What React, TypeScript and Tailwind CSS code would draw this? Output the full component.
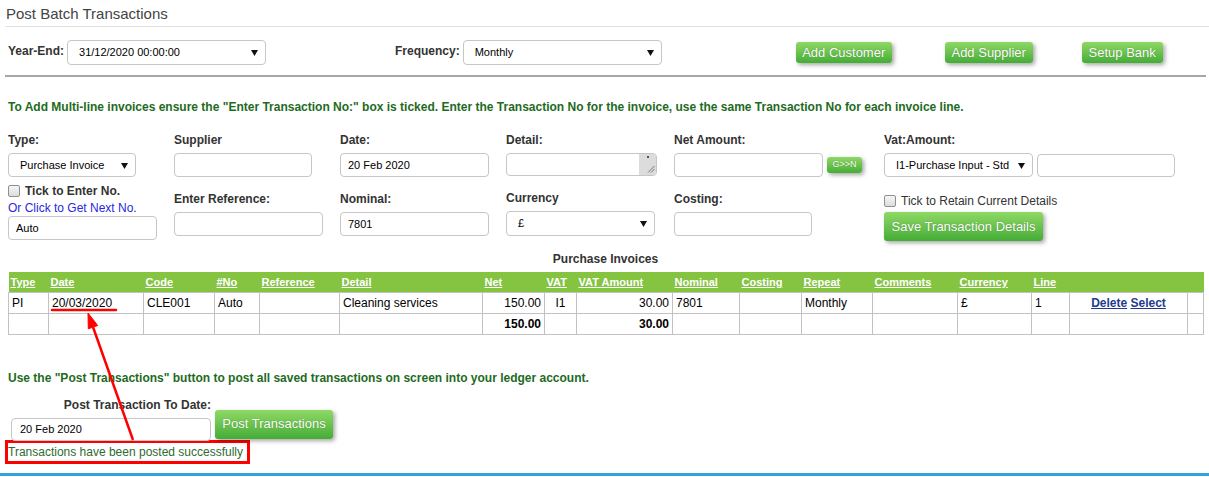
import React from "react";

const Caret = () => (
  <svg width="7" height="7" viewBox="0 0 7 7" className="shrink-0">
    <path d="M0 1h7L3.5 7z" fill="#111" />
  </svg>
);

function Select({ className = "", text }: { className?: string; text: string }) {
  return (
    <div
      className={`flex items-center justify-between rounded-[4px] border border-[#c6c6c6] bg-white pl-[11px] pr-[7px] text-[11px] text-black ${className}`}
    >
      <span>{text}</span>
      <Caret />
    </div>
  );
}

function Input({ className = "", value = "" }: { className?: string; value?: string }) {
  return (
    <div
      className={`flex items-center rounded-[4px] border border-[#c6c6c6] bg-white pl-[7px] text-[11px] text-black ${className}`}
    >
      {value}
    </div>
  );
}

function Label({ children, className = "" }: { children: React.ReactNode; className?: string }) {
  return (
    <div className={`h-[18px] text-[12px] font-bold leading-[18px] text-[#333] ${className}`}>{children}</div>
  );
}

function GBtn({ className = "", children }: { className?: string; children: React.ReactNode }) {
  return (
    <div
      className={`flex items-center justify-center rounded-[3px] bg-linear-to-b from-[#8fd865] to-[#42ad36] text-white shadow-[2px_2px_4px_rgba(0,0,0,0.35)] [text-shadow:0_0_1px_rgba(0,0,0,0.35)] ${className}`}
    >
      {children}
    </div>
  );
}

const Check = () => (
  <span className="inline-block h-[12px] w-[12px] shrink-0 rounded-[2px] border border-[#8f8f8f] bg-linear-to-b from-[#f6f6f6] to-[#dcdcdc]" />
);

const th = "pl-[2px] text-left align-middle text-[11px] font-bold leading-[14px] text-white underline";
const td = "border border-[#c2c2c2] px-[3px] align-middle text-[12px] leading-[14px]";

export default function App() {
  return (
    <div className="relative h-[477px] w-[1209px] overflow-hidden bg-white text-black font-['Liberation_Sans',Arial,sans-serif]">
      {/* Title */}
      <div className="ml-[6px] h-[26px] pt-[5px] text-[15px] leading-[18px] text-[#444]">Post Batch Transactions</div>
      <div className="ml-[5px] h-px bg-[#e2e2e2]" />

      {/* Top row */}
      <div className="ml-[8px] mt-[13px] flex h-[25px] items-center">
        <span className="mb-[3px] text-[12px] font-bold text-[#333]">Year-End:</span>
        <Select className="ml-[3px] h-[25px] w-[199px]" text="31/12/2020 00:00:00" />
        <span className="mb-[3px] ml-[129px] text-[12px] font-bold text-[#333]">Frequency:</span>
        <Select className="ml-[3px] h-[25px] w-[199px]" text="Monthly" />
        <GBtn className="ml-[134px] h-[21px] w-[96px] text-[13px]">Add Customer</GBtn>
        <GBtn className="ml-[53px] h-[21px] w-[88px] text-[13px]">Add Supplier</GBtn>
        <GBtn className="ml-[49px] h-[21px] w-[81px] text-[13px]">Setup Bank</GBtn>
      </div>
      <div className="ml-[5px] mr-[3px] mt-[10px] h-[2px] bg-[#a6a6a6]" />

      <div className="ml-[8px] mt-[22px] text-[12px] font-bold leading-[16px] text-[#1e6b1e]">
        To Add Multi-line invoices ensure the "Enter Transaction No:" box is ticked. Enter the Transaction No for the invoice, use the same Transaction No for each invoice line.
      </div>

      {/* Form row A */}
      <div className="ml-[8px] mt-[16px] flex">
        <div className="w-[166px]">
          <Label>Type:</Label>
          <Select className="mt-[4px] h-[24px] w-[128px]" text="Purchase Invoice" />
        </div>
        <div className="w-[166px]">
          <Label>Supplier</Label>
          <Input className="mt-[4px] h-[24px] w-[138px]" />
        </div>
        <div className="w-[166px]">
          <Label>Date:</Label>
          <Input className="mt-[4px] h-[24px] w-[149px]" value="20 Feb 2020" />
        </div>
        <div className="w-[168px]">
          <Label>Detail:</Label>
          <div className="mt-[4px] flex h-[23px] w-[151px] overflow-hidden rounded-[4px] border border-[#c6c6c6] bg-white">
            <div className="flex-1" />
            <div className="flex w-[17px] flex-col justify-between bg-[#dcdcdc] py-[2px]">
              <span className="block h-[2px] w-[2px] self-center bg-[#555]" />
              <svg width="8" height="8" viewBox="0 0 8 8" className="mr-[1px] self-end">
                <path d="M1 7.5L7.5 1M4 7.5L7.5 4" stroke="#777" strokeWidth="1" />
              </svg>
            </div>
          </div>
        </div>
        <div className="w-[210px]">
          <Label>Net Amount:</Label>
          <div className="mt-[4px] flex items-center">
            <Input className="h-[24px] w-[149px]" />
            <GBtn className="ml-[4px] h-[16px] w-[35px] text-[9px]">G&gt;&gt;N</GBtn>
          </div>
        </div>
        <div>
          <Label>Vat:Amount:</Label>
          <div className="mt-[4px] flex items-center">
            <Select className="h-[24px] w-[149px]" text="I1-Purchase Input - Std" />
            <Input className="ml-[4px] h-[23px] w-[138px]" />
          </div>
        </div>
      </div>

      {/* Form row B */}
      <div className="ml-[8px] flex items-start">
        <div className="w-[166px] pt-[6px]">
          <div className="flex h-[16px] items-center gap-[5px]">
            <Check />
            <span className="text-[12px] font-bold text-[#333]">Tick to Enter No.</span>
          </div>
          <div className="mt-[1px] h-[16px] text-[12px] leading-[16px] text-[#2828e0]">Or Click to Get Next No.</div>
          <Input className="h-[24px] w-[149px]" value="Auto" />
        </div>
        <div className="w-[166px] pt-[13px]">
          <Label>Enter Reference:</Label>
          <Input className="mt-[4px] h-[24px] w-[149px]" />
        </div>
        <div className="w-[166px] pt-[13px]">
          <Label>Nominal:</Label>
          <Input className="mt-[4px] h-[24px] w-[149px]" value="7801" />
        </div>
        <div className="w-[168px] pt-[12px]">
          <Label>Currency</Label>
          <Select className="mt-[4px] h-[25px] w-[149px]" text="£" />
        </div>
        <div className="w-[210px] pt-[13px]">
          <Label>Costing:</Label>
          <Input className="mt-[4px] h-[24px] w-[138px]" />
        </div>
        <div className="pt-[16px]">
          <div className="flex h-[16px] items-center gap-[5px]">
            <Check />
            <span className="text-[12px] text-[#333]">Tick to Retain Current Details</span>
          </div>
          <GBtn className="mt-[3px] h-[29px] w-[159px] text-[13px]">Save Transaction Details</GBtn>
        </div>
      </div>

      <div className="ml-[8px] mt-[10px] w-[1195px] text-center text-[12px] font-bold leading-[16px] text-[#333]">
        Purchase Invoices
      </div>

      {/* Table */}
      <table className="ml-[8px] mt-[5px] w-[1195px] table-fixed border-collapse">
        <colgroup>
          <col className="w-[40px]" />
          <col className="w-[95px]" />
          <col className="w-[71px]" />
          <col className="w-[45px]" />
          <col className="w-[80px]" />
          <col className="w-[143px]" />
          <col className="w-[62px]" />
          <col className="w-[32px]" />
          <col className="w-[96px]" />
          <col className="w-[67px]" />
          <col className="w-[62px]" />
          <col className="w-[71px]" />
          <col className="w-[85px]" />
          <col className="w-[74px]" />
          <col className="w-[38px]" />
          <col className="w-[118px]" />
          <col className="w-[16px]" />
        </colgroup>
        <thead>
          <tr className="h-[20px] bg-[#84c441]">
            <th className={th}>Type</th>
            <th className={th}>Date</th>
            <th className={th}>Code</th>
            <th className={th}>#No</th>
            <th className={th}>Reference</th>
            <th className={th}>Detail</th>
            <th className={th}>Net</th>
            <th className={th}>VAT</th>
            <th className={th}>VAT Amount</th>
            <th className={th}>Nominal</th>
            <th className={th}>Costing</th>
            <th className={th}>Repeat</th>
            <th className={th}>Comments</th>
            <th className={th}>Currency</th>
            <th className={th}>Line</th>
            <th className={th}></th>
            <th className={th}></th>
          </tr>
        </thead>
        <tbody>
          <tr className="h-[21px]">
            <td className={td}>PI</td>
            <td className={td}>20/03/2020</td>
            <td className={td}>CLE001</td>
            <td className={td}>Auto</td>
            <td className={td}></td>
            <td className={td}>Cleaning services</td>
            <td className={`${td} text-right`}>150.00</td>
            <td className={`${td} text-center`}>I1</td>
            <td className={`${td} text-right`}>30.00</td>
            <td className={td}>7801</td>
            <td className={td}></td>
            <td className={td}>Monthly</td>
            <td className={td}></td>
            <td className={td}>£</td>
            <td className={td}>1</td>
            <td className={`${td} text-center font-bold`}>
              <span className="text-[#1f3b8f] underline">Delete</span>{" "}
              <span className="text-[#1f3b8f] underline">Select</span>
            </td>
            <td className={td}></td>
          </tr>
          <tr className="h-[21px]">
            <td className={td}></td>
            <td className={td}></td>
            <td className={td}></td>
            <td className={td}></td>
            <td className={td}></td>
            <td className={td}></td>
            <td className={`${td} text-right font-bold`}>150.00</td>
            <td className={td}></td>
            <td className={`${td} text-right font-bold`}>30.00</td>
            <td className={td}></td>
            <td className={td}></td>
            <td className={td}></td>
            <td className={td}></td>
            <td className={td}></td>
            <td className={td}></td>
            <td className={td}></td>
            <td className={td}></td>
          </tr>
        </tbody>
      </table>

      <div className="ml-[8px] mt-[35px] text-[12px] font-bold leading-[16px] text-[#1e6b1e]">
        Use the "Post Transactions" button to post all saved transactions on screen into your ledger account.
      </div>

      {/* Post section */}
      <div className="ml-[11px] flex items-start">
        <div className="w-[200px] pt-[11px]">
          <div className="h-[16px] text-right text-[12px] font-bold leading-[16px] text-[#333]">Post Transaction To Date:</div>
          <Input className="mt-[5px] h-[23px] w-[200px] pl-[8px]" value="20 Feb 2020" />
        </div>
        <GBtn className="ml-[4px] mt-[24px] h-[29px] w-[118px] text-[13px]">Post Transactions</GBtn>
      </div>
      <div className="ml-[5px] mt-[-1px] flex h-[24px] w-[245px] items-center border-[3px] border-[#f00] text-[12px] text-[#2f6a2f]">
        Transactions have been posted successfully
      </div>

      <div className="mt-[9px] h-[3px] w-[1209px] bg-[#2fa4dc]" />

      {/* Annotation overlay */}
      <svg className="pointer-events-none absolute left-0 top-0" width="1209" height="477" viewBox="0 0 1209 477">
        <line x1="52" y1="310" x2="116" y2="310" stroke="#f00" strokeWidth="2.5" strokeLinecap="round" />
        <line x1="133" y1="440" x2="93" y2="327" stroke="#f00" strokeWidth="2.5" />
        <polygon points="88,313 97.7,325.5 88.3,328.8" fill="#f00" stroke="#f00" strokeWidth="1" strokeLinejoin="round" />
      </svg>
    </div>
  );
}
